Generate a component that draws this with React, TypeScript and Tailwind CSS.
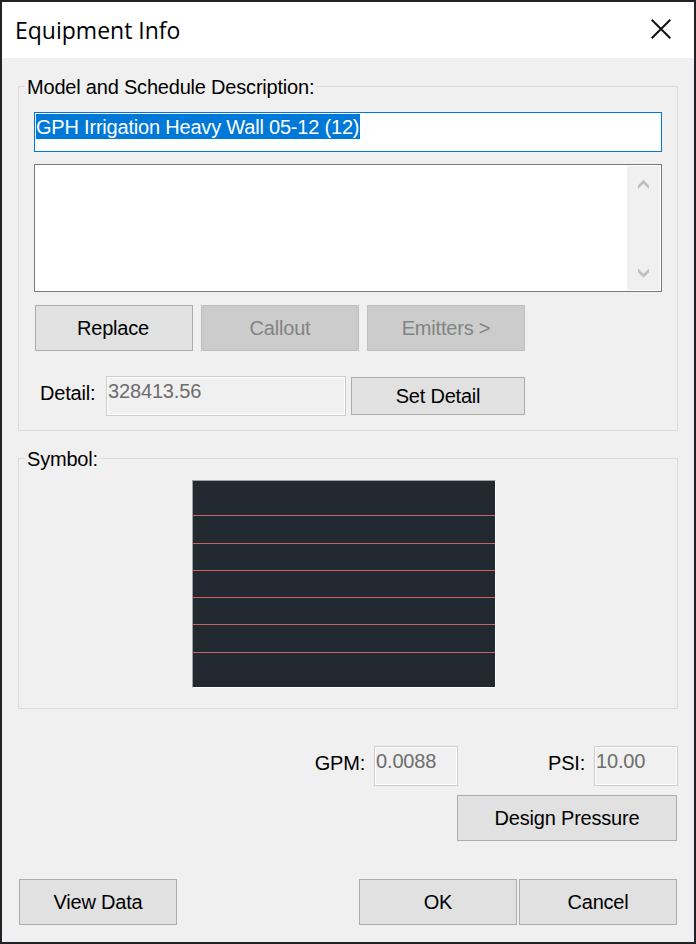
import { useState } from "react";
import type { ReactNode } from "react";
import clsx from "clsx";

type ButtonProps = {
  children: ReactNode;
  className?: string;
  disabled?: boolean;
};

// classic windows push button
function DialogButton({ children, className, disabled }: ButtonProps) {
  return (
    <button
      disabled={disabled}
      className={clsx(
        "flex shrink-0 items-center justify-center border",
        disabled
          ? "border-[#bfbfbf] bg-[#cccccc] text-[#838383]"
          : "border-[#adadad] bg-[#e1e1e1] text-black",
        className
      )}
    >
      {children}
    </button>
  );
}

// greyed out, read only value
function ReadOnlyField({ value, className }: { value: string; className: string }) {
  return (
    <div
      className={clsx(
        "h-10 shrink-0 border border-[#cccccc] bg-[#f0f0f0] pl-px pt-[3px] leading-[23px] tracking-[-0.15px] text-[#6d6d6d] inset-ring inset-ring-white",
        className
      )}
    >
      {value}
    </div>
  );
}

// line positions inside the symbol preview
const symbolLines = [34, 62, 89, 116, 143, 171];

export default function App() {
  const [model] = useState("GPH Irrigation Heavy Wall 05-12 (12)");

  return (
    <main className="flex h-[944px] w-[696px] flex-col border-2 border-[#202328] bg-[#f0f0f0] font-['Liberation_Sans',Arial,sans-serif] text-[20px] leading-[23px] tracking-[-0.2px] text-black">
      {/* title bar */}
      <header className="flex h-14 shrink-0 justify-between bg-white">
        <h1 className="pl-[13px] pt-3 font-['Open_Sans',sans-serif] text-[23px] leading-8 tracking-[0px]">
          Equipment Info
        </h1>
        <button aria-label="Close" className="mr-[23px] mt-[17px] size-5">
          <svg viewBox="0 0 20 20" className="size-5" fill="none" stroke="#111" strokeWidth="2">
            <path d="M.7.7 19.3 19.3M19.3.7.7 19.3" />
          </svg>
        </button>
      </header>

      <div className="flex flex-col px-4 pt-[17px]">
        {/* model and description */}
        <fieldset className="h-[356px] border border-[#dcdcdc] px-[15px]">
          <legend className="-ml-[9px] h-[23px] px-0.5 pt-px">
            Model and Schedule Description:
          </legend>
          <div className="mt-[14px] flex h-10 w-[628px] items-start border border-[#0078d7] bg-white p-px">
            <span className="h-[25px] w-[324px] whitespace-nowrap bg-[#0078d7] pt-0.5 text-white">
              {model}
            </span>
          </div>
          <div className="mt-3 flex h-32 w-[628px] justify-end border border-[#7a7a7a] bg-white p-px">
            <div className="flex w-[33px] flex-col items-center justify-between bg-[#f0f0f0] pb-3 pt-[13px]">
              <svg viewBox="0 0 11 10" className="h-[10px] w-[11px]" fill="#bfbfbf">
                <path d="M5.5.7 11 6.200v3.800L5.500 4.700 0 10V6.200Z" />
              </svg>
              <svg viewBox="0 0 11 10" className="h-[10px] w-[11px]" fill="#bfbfbf">
                <path d="M5.500 9.700 11 4.200V.4L5.500 5.700 0 .4V4.200Z" />
              </svg>
            </div>
          </div>
          <div className="ml-px mt-[13px] flex gap-2">
            <DialogButton className="h-[46px] w-[158px] pr-0.5">Replace</DialogButton>
            <DialogButton className="h-[46px] w-[158px]" disabled>
              Callout
            </DialogButton>
            <DialogButton className="h-[46px] w-[158px]" disabled>
              Emitters &gt;
            </DialogButton>
          </div>
          <div className="mt-[25px] flex">
            <span className="w-[72px] pl-[6px] pt-[6px]">Detail:</span>
            <ReadOnlyField value="328413.56" className="w-60" />
            <DialogButton className="ml-[5px] mt-px h-[38px] w-[174px]">Set Detail</DialogButton>
          </div>
        </fieldset>

        {/* symbol preview */}
        <fieldset className="mt-4 h-[262px] border border-[#dcdcdc] px-[15px]">
          <legend className="-ml-[9px] h-[23px] px-0.5 pt-px">Symbol:</legend>
          <svg
            viewBox="0 0 302 206"
            shapeRendering="crispEdges"
            className="ml-[158px] mt-[10px] box-border h-[208px] w-[304px] border border-b-white border-l-[#a0a0a0] border-r-white border-t-[#a0a0a0] bg-[#222930]"
          >
            {symbolLines.map((y) => (
              <rect key={y} x="0" y={y} width="302" height="1" fill="#c96265" />
            ))}
          </svg>
        </fieldset>

        {/* flow and pressure */}
        <div className="mt-[37px] flex justify-end">
          <span className="pr-[9px] pt-[6px]">GPM:</span>
          <ReadOnlyField value="0.0088" className="w-[84px]" />
          <span className="w-[136px] pr-[9px] pt-[6px] text-right">PSI:</span>
          <ReadOnlyField value="10.00" className="w-[84px]" />
        </div>
        <DialogButton className="mr-px mt-[9px] h-[46px] w-[220px] self-end">
          Design Pressure
        </DialogButton>

        {/* footer actions */}
        <footer className="mt-[38px] flex gap-0.5 px-px">
          <DialogButton className="mr-auto h-[46px] w-[158px]">View Data</DialogButton>
          <DialogButton className="h-[46px] w-[158px]">OK</DialogButton>
          <DialogButton className="h-[46px] w-[158px]">Cancel</DialogButton>
        </footer>
      </div>
    </main>
  );
}
